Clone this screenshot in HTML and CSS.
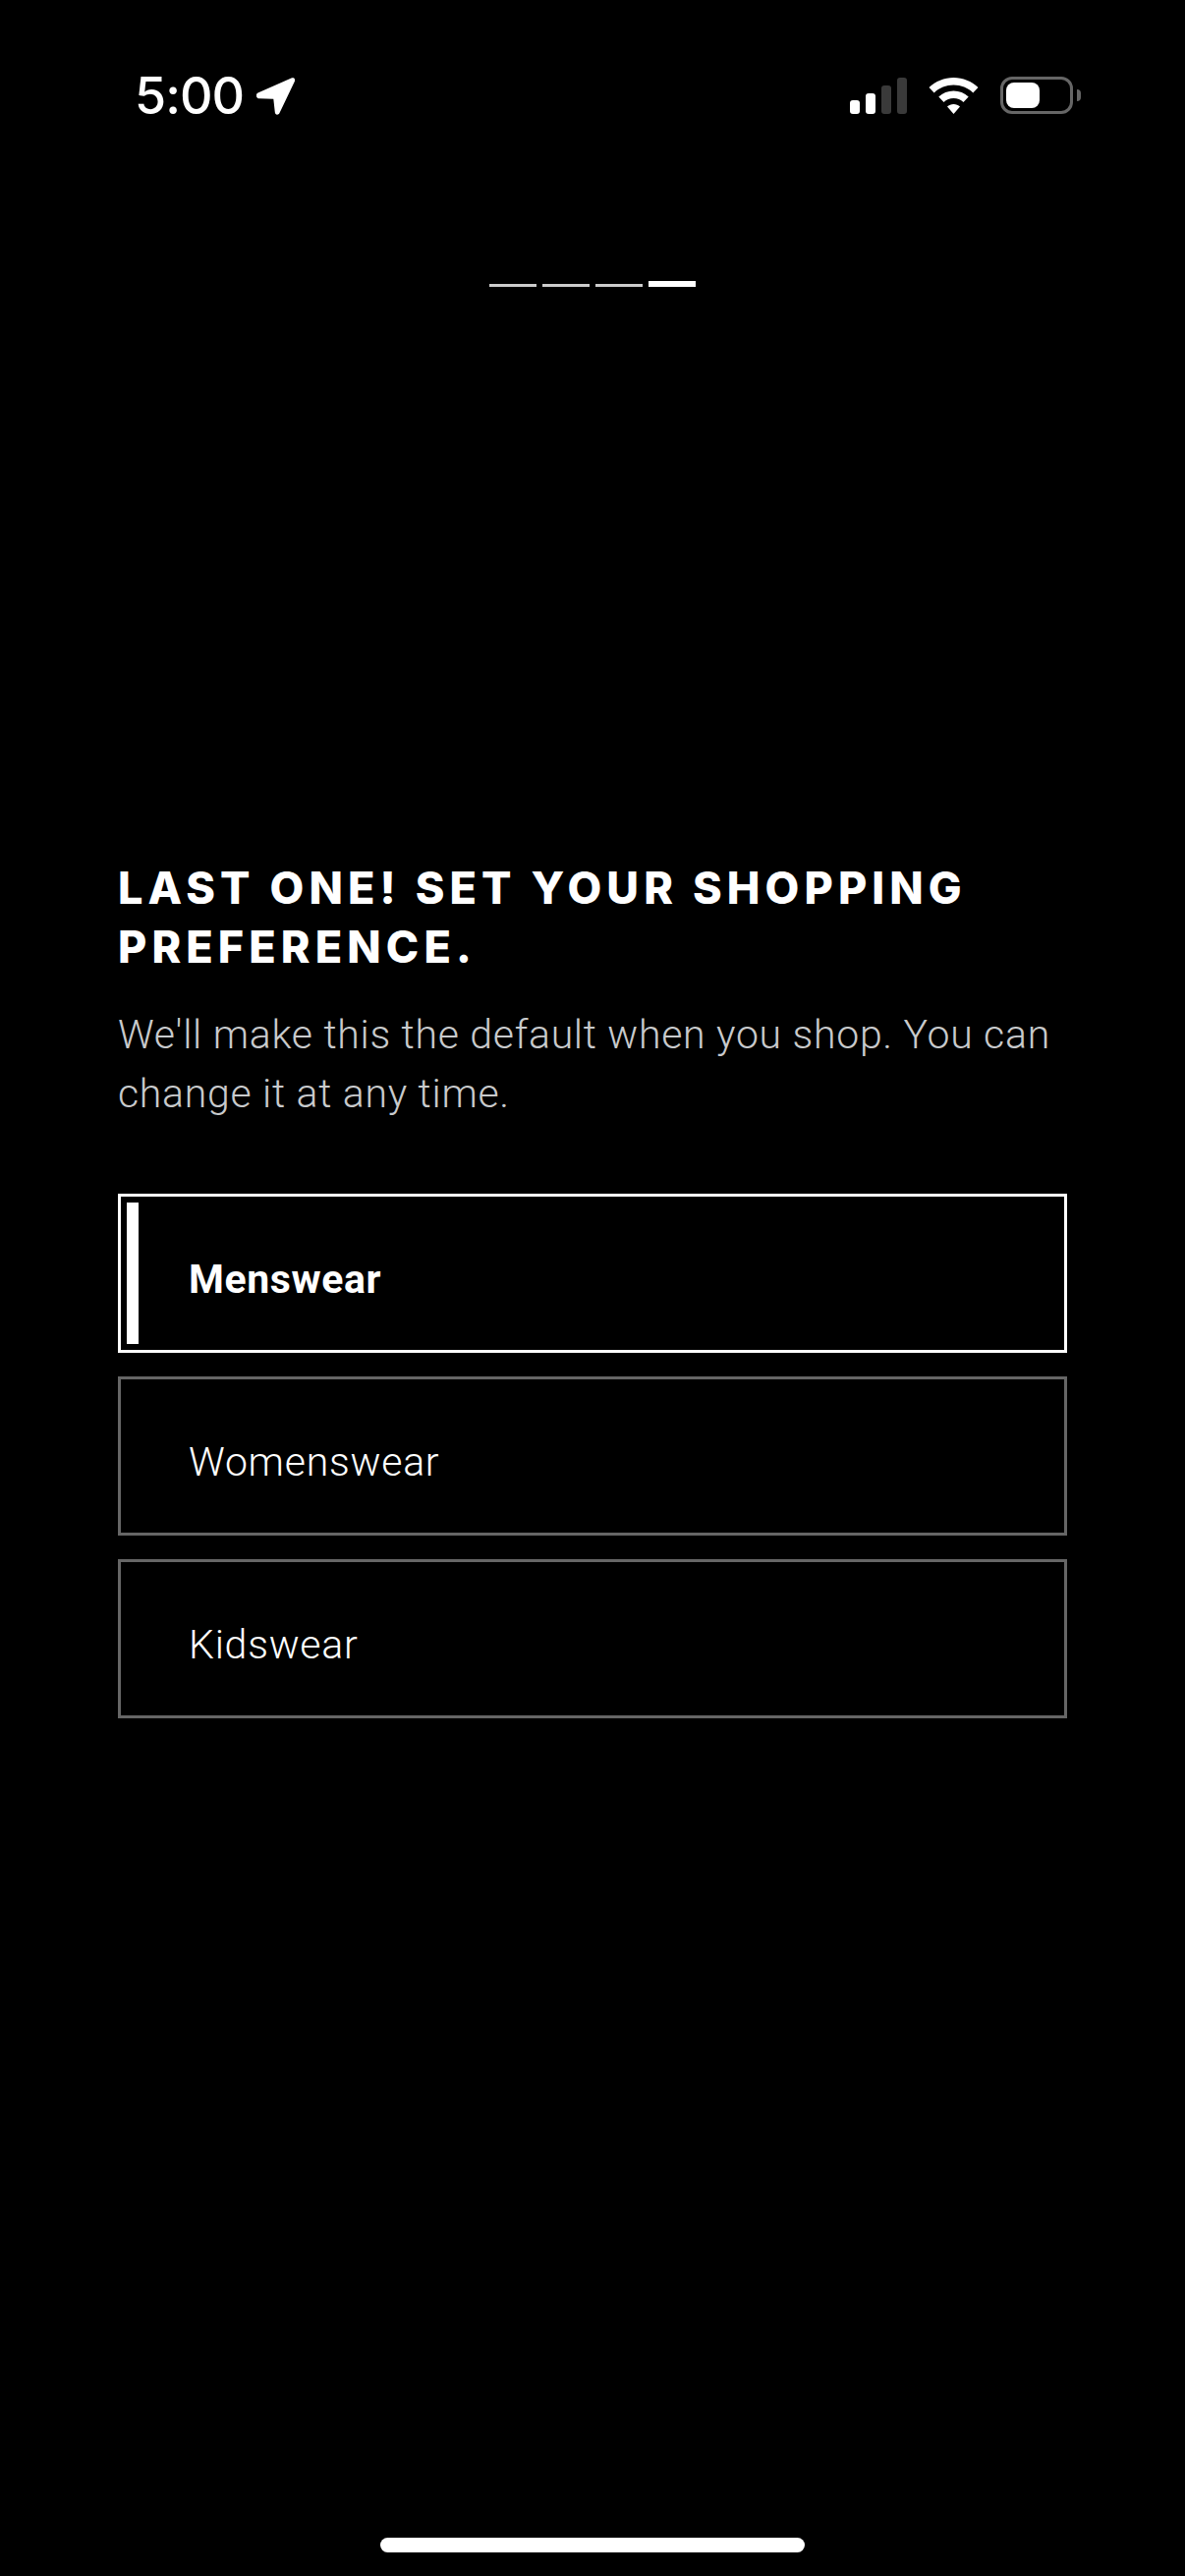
FILE: index.html
```html
<!DOCTYPE html>
<html lang="en">
<head>
    <meta charset="UTF-8">
    <meta name="viewport" content="width=device-width, initial-scale=1.0">
    <title>Shopping Preference</title>
    <link rel="stylesheet" href="styles.css">
</head>
<body>
    <div class="screen">
        <!-- Status bar -->
        <div class="status-bar">
            <div class="status-left">
                <span class="time">5:00</span>
                <svg class="location" viewBox="0 0 39 38">
                    <path d="M1.500 15.500 35.500.6C38-.5 40 1.500 38.800 3.900L23.500 36c-1.200 2.500-4.500 2.200-4.700-.7L17.300 21.700 3 21.300c-3.500-.1-4.300-4.500-1.500-5.800z" />
                </svg>
            </div>
            <div class="status-right">
                <div class="signal">
                    <span class="bar bar1"></span>
                    <span class="bar bar2"></span>
                    <span class="bar bar3 off"></span>
                    <span class="bar bar4 off"></span>
                </div>
                <svg class="wifi" viewBox="0 0 51 37">
                    <path d="M25.500 0C35 0 43.800 3.700 50.500 10l-5.200 5.400C40 10.300 33 7.500 25.500 7.500S11 10.300 5.700 15.400L.5 10C7.200 3.700 16 0 25.500 0z" />
                    <path d="M25.500 13.500c5.800 0 11.100 2.200 15.200 6l-5.200 5.400c-2.700-2.400-6.200-3.900-10-3.900s-7.300 1.500-10 3.900l-5.200-5.400c4.100-3.800 9.400-6 15.200-6z" />
                    <path d="M25.500 27c2.500 0 4.800.9 6.500 2.500L25.500 37 19 29.500c1.700-1.600 4-2.500 6.500-2.500z" />
                </svg>
                <div class="battery">
                    <div class="battery-body">
                        <div class="battery-level"></div>
                    </div>
                    <div class="battery-nub"></div>
                </div>
            </div>
        </div>

        <!-- Step indicator -->
        <div class="steps">
            <span class="step"></span>
            <span class="step"></span>
            <span class="step"></span>
            <span class="step current"></span>
        </div>

        <div class="content">
            <h1>Last one! Set your shopping preference.</h1>
            <p class="intro">We'll make this the default when you shop. You can change it at any time.</p>

            <div class="options">
                <div class="option selected">
                    <span class="marker"></span>
                    <span class="label">Menswear</span>
                </div>
                <div class="option">
                    <span class="label">Womenswear</span>
                </div>
                <div class="option">
                    <span class="label">Kidswear</span>
                </div>
            </div>
        </div>

        <div class="home-bar"></div>
    </div>
</body>
</html>
```

FILE: styles.css
```css
* {
    margin: 0;
    padding: 0;
    box-sizing: border-box;
}

html, body {
    width: 1206px;
    height: 2622px;
    overflow: hidden;
    background: #000;
}

body {
    font-family: Roboto, "Noto Sans", sans-serif;
    color: #fff;
}

.screen {
    display: flex;
    flex-direction: column;
    height: 100%;
}

/* Status bar */
.status-bar {
    display: flex;
    justify-content: space-between;
    align-items: flex-start;
    height: 286px;
    padding: 78px 106px 0 137px;
}

.status-left {
    display: flex;
    align-items: center;
    gap: 13px;
    height: 39px;
}

.time {
    font-family: Inter, sans-serif;
    font-size: 52px;
    font-weight: 500;
    line-height: 39px;
    letter-spacing: -1px;
}

.location {
    width: 39px;
    height: 38px;
    fill: #fff;
}

.status-right {
    display: flex;
    align-items: flex-start;
}

.signal {
    display: flex;
    align-items: flex-end;
    gap: 6px;
    height: 38px;
    margin-right: 22px;
}

.bar {
    width: 10px;
    background: #fff;
    border-radius: 3px;
}

.bar.off { background: #3a3a3a; }

.bar1 { height: 14px; }
.bar2 { height: 21px; }
.bar3 { height: 29px; }
.bar4 { height: 37px; }

.wifi {
    width: 51px;
    height: 37px;
    margin: 1px 22px 0 0;
    fill: #fff;
}

.battery {
    display: flex;
    align-items: center;
    gap: 4px;
    height: 38px;
}

.battery-body {
    width: 74px;
    height: 38px;
    border: 3px solid #666;
    border-radius: 12px;
    padding: 3px;
}

.battery-level {
    width: 34px;
    height: 100%;
    background: #fff;
    border-radius: 8px;
}

.battery-nub {
    width: 4px;
    height: 12px;
    background: #666;
    border-radius: 0 4px 4px 0;
}

/* Step indicator */
.steps {
    display: flex;
    justify-content: center;
    align-items: flex-end;
    gap: 6px;
    height: 6px;
}

.step {
    width: 48px;
    height: 3px;
    background: #ccc;
}

.step.current {
    height: 6px;
    background: #fff;
}

/* Main content */
.content {
    padding: 0 120px;
    margin-top: 582px;
}

h1 {
    font-family: Inter, sans-serif;
    font-size: 45px;
    font-weight: 800;
    line-height: 60px;
    letter-spacing: 5.1px;
    text-transform: uppercase;
}

.intro {
    margin-top: 29px;
    font-size: 41px;
    font-weight: 300;
    line-height: 60px;
    letter-spacing: 0.7px;
    color: #c8cacc;
}

.options {
    display: flex;
    flex-direction: column;
    gap: 24px;
    margin-top: 72px;
}

.option {
    display: flex;
    align-items: center;
    height: 162px;
    padding: 11px 0 0 69px;
    position: relative;
    border: 3px solid #666;
}

.option.selected {
    border-color: #fff;
}

.marker {
    position: absolute;
    left: 6px;
    top: 6px;
    bottom: 6px;
    width: 12px;
    background: #fff;
}

.label {
    font-size: 41px;
    font-weight: 300;
    letter-spacing: 0.75px;
}

.selected .label {
    font-weight: 700;
    letter-spacing: 0.6px;
}

.home-bar {
    width: 432px;
    height: 15px;
    margin: auto auto 24px;
    background: #fff;
    border-radius: 8px;
}
```
